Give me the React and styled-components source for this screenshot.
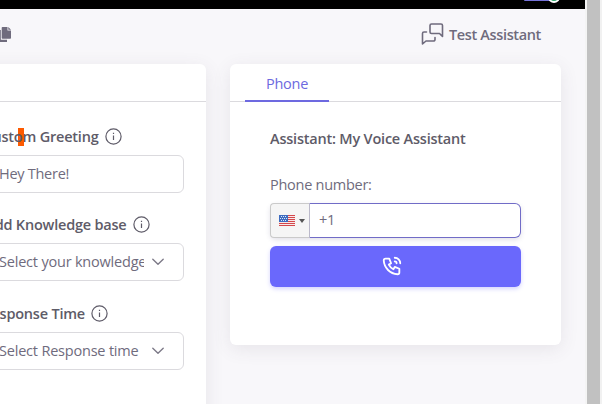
import React from "react";
import styled, { createGlobalStyle } from "styled-components";

const Global = createGlobalStyle`
  * { box-sizing: border-box; }
  body { margin: 0; overflow: hidden; background: #f8f7fa; font-family: "Open Sans", "Noto Sans", sans-serif; font-size: 14.5px; color: #6f6b7d; }
  svg { display: block; flex: none; }
`;

const Shell = styled.div`
  display: flex;
  width: 602px;
  height: 404px;
  overflow: hidden;
`;
const Page = styled.div`
  width: 585px;
  height: 404px;
  overflow: hidden;
  background: #f8f7fa;
`;
const Scrollbar = styled.div`
  width: 17px;
  background: #c1c1c1;
  border-left: 2px solid #f4f4f4;
  border-right: 2px solid #f1f1f1;
`;
const TopBar = styled.div`
  height: 9px;
  background: #000;
  display: flex;
  align-items: flex-start;
  padding-left: 524px;
  overflow: hidden;
`;
const Avatar = styled.div`
  width: 30px;
  height: 1px;
  background: #7673d8;
  border-radius: 0 0 8px 8px;
`;
const Status = styled.div`
  width: 12px;
  height: 12px;
  margin: -9px 0 0 -6px;
  flex: none;
  border-radius: 50%;
  background: #28a568;
  border: 2px solid #fff;
`;
const Toolbar = styled.div`
  height: 55px;
  display: flex;
  justify-content: space-between;
  padding: 13px 44px 0 0;
`;
const CopyIcon = styled.svg`
  margin: 4px 0 0 -5px;
`;
const TestLink = styled.div`
  display: flex;
  height: 24px;
  align-items: center;
  gap: 5px;

  & > span {
    padding-top: 1px;
  }
`;
const Text = styled.span`
  white-space: pre;
  line-height: 22px;
  font-size: 14.5px;
  font-weight: ${(p) => (p.$bold ? 600 : 400)};
  letter-spacing: ${(p) => p.$track ?? (p.$bold ? -0.21 : -0.27)}px;
  color: ${(p) => p.$color || "inherit"};
`;
const Columns = styled.div`
  display: flex;
  align-items: flex-start;
  gap: 24px;
`;
const Card = styled.section`
  background: #fff;
  border-radius: 6px;
  box-shadow: 0 4px 18px rgba(75, 70, 92, 0.1);
  width: ${(p) => p.$width}px;
  height: ${(p) => p.$height}px;
  margin-left: ${(p) => p.$shift || 0}px;
  flex: none;
`;
const CardHeader = styled.div`
  height: 38px;
  border-bottom: 1px solid #dbdade;
  padding-left: 15px;
`;
const Tab = styled.div`
  width: 84px;
  height: 38px;
  border-bottom: 2px solid #6d69e0;
  display: flex;
  justify-content: center;
  padding-top: 9px;
`;
const Form = styled.div`
  padding: 23px 22px 0 21px;
`;
const Group = styled.div`
  height: ${(p) => p.$height}px;
`;
const Label = styled.div`
  display: flex;
  align-items: center;
  height: 22px;
  gap: 6px;
  color: #5e5b68;
  width: ${(p) => p.$width}px;
  justify-content: flex-end;

  & > span {
    padding-top: ${(p) => p.$drop ?? 1}px;
  }
`;
const Marked = styled.span`
  position: relative;
  isolation: isolate;

  &::before {
    content: "";
    position: absolute;
    z-index: -1;
    left: 4px;
    top: 1px;
    width: 6px;
    height: 18px;
    background: #fd5a00;
  }
`;
const Field = styled.div`
  height: 38px;
  margin-top: 8px;
  border: 1px solid #dbdade;
  border-radius: 6px;
  display: flex;
  align-items: center;
  justify-content: space-between;
  padding: 0 18px 0 17px;
`;
const Clip = styled.div`
  width: 145px;
  overflow: hidden;
  display: flex;
`;
const PhoneBody = styled.div`
  padding: 26px 40px 0;
  display: flex;
  flex-direction: column;
`;
const PhoneLabel = styled.div`
  height: 22px;
  margin-top: 24px;
`;
const PhoneInput = styled.div`
  display: flex;
  height: 35px;
  margin-top: 7px;
  border-radius: 6px;
  box-shadow: 0 2px 5px rgba(75, 70, 120, 0.16);
`;
const Country = styled.div`
  width: 39px;
  border: 1px solid #cacaca;
  border-right: 0;
  border-radius: 4px 0 0 4px;
  background: #f5f5f5;
  display: flex;
  align-items: center;
  gap: 4px;
  padding-left: 8px;
`;
const NumberBox = styled.div`
  flex: 1;
  border: 1px solid #716cc7;
  border-left-color: #bbb9ca;
  border-radius: 0 6px 6px 0;
  background: #fff;
  display: flex;
  align-items: center;
  padding: 0 0 1px 9px;
`;
const Caret = styled.i`
  border: 3px solid transparent;
  border-top: 4px solid #555;
  border-bottom: 0;
`;
const CallButton = styled.button`
  height: 41px;
  margin-top: 8px;
  border: 0;
  border-radius: 6px;
  background: #6a68fc;
  display: flex;
  align-items: center;
  justify-content: center;
  padding: 0 8px 1px 0;
  box-shadow: 0 2px 4px rgba(105, 102, 250, 0.28);
`;

const Info = () => (
  <svg width="17" height="17" viewBox="0 0 17 17" fill="none" stroke="#5e5b68" strokeWidth="1.2">
    <circle cx="8.5" cy="8.5" r="7.6" />
    <path d="M8.5 7.4v4.6M8.5 4.7v1.4" />
  </svg>
);
const Chevron = () => (
  <svg width="14" height="8" viewBox="0 0 14 8" fill="none" stroke="#7d7a88" strokeWidth="1.4" strokeLinecap="round" strokeLinejoin="round">
    <path d="M1.8 1.2 7 6.2l5.2-5" />
  </svg>
);
const Chat = () => (
  <svg width="23" height="23" viewBox="0 0 23 23" fill="none" stroke="#6f6b7d" strokeWidth="1.6" strokeLinejoin="round" strokeLinecap="round">
    <path d="M21.5 13.5 18.500 10.500H10.500A1.500 1.500 0 0 1 9 9V2.500A1.500 1.500 0 0 1 10.500 1H20A1.500 1.500 0 0 1 21.500 2.500z" />
    <path d="M5.500 9H3A1.500 1.500 0 0 0 1.500 10.500v10.500L5 18h7.500A1.500 1.500 0 0 0 14 16.500v-2" />
  </svg>
);
const Flag = () => (
  <svg width="16" height="11" viewBox="0 0 16 11" shapeRendering="crispEdges">
    <rect width="16" height="11" fill="#f7e9ea" />
    <g fill="#d4484c">
      <rect width="16" height="1" />
      <rect y="2" width="16" height="1" />
      <rect y="4" width="16" height="1" />
      <rect y="6" width="16" height="1" />
      <rect y="8" width="16" height="1" />
      <rect y="10" width="16" height="1" />
    </g>
    <rect width="9" height="7" fill="#3f6dc0" />
    <g stroke="#dce8fa" strokeDasharray="1 1">
      <path d="M2 1.500h6M1 3.500h7M2 5.500h6" />
    </g>
  </svg>
);
const PhoneCall = () => (
  <svg width="22" height="22" viewBox="0 0 24 24" fill="none" stroke="#fff" strokeWidth="2" strokeLinecap="round" strokeLinejoin="round">
    <path d="M5 4h4l2 5-2.500 1.500a11 11 0 0 0 5 5L15 13l5 2v4a2 2 0 0 1-2 2A16 16 0 0 1 3 6a2 2 0 0 1 2-2" />
    <path d="M15 7a2 2 0 0 1 2 2M15 3a6 6 0 0 1 6 6" />
  </svg>
);

export default function App() {
  return (
    <>
      <Global />
      <Shell>
        <Page>
          <TopBar>
            <Avatar />
            <Status />
          </TopBar>
          <Toolbar>
            <CopyIcon width="17" height="17" viewBox="0 0 17 17" fill="#6f6b7d">
              <path d="M7.500 1h5v3.500H16V12a.8.800 0 0 1-.8.800H7.500A.8.800 0 0 1 6.700 12V1.800A.8.800 0 0 1 7.500 1z" />
              <path d="M13.300 1 16 3.700h-2.700zM1 4h4.800v9.700H12V16H1z" />
            </CopyIcon>
            <TestLink>
              <Chat />
              <Text $bold $track={-0.36}>Test Assistant</Text>
            </TestLink>
          </Toolbar>
          <Columns>
            <Card $width={246} $height={370} $shift={-40}>
              <CardHeader />
              <Form>
                <Group $height={88}>
                  <Label $width={140.5}>
                    <Text $bold>Cust<Marked>o</Marked>m Greeting</Text>
                    <Info />
                  </Label>
                  <Field><Text>Hey There!</Text></Field>
                </Group>
                <Group $height={89}>
                  <Label $width={168.5} $drop={2}>
                    <Text $bold>Add Knowledge base</Text>
                    <Info />
                  </Label>
                  <Field>
                    <Clip><Text $track={-0.2}>Select your knowledge base</Text></Clip>
                    <Chevron />
                  </Field>
                </Group>
                <Group $height={88}>
                  <Label $width={127}>
                    <Text $bold>Response Time</Text>
                    <Info />
                  </Label>
                  <Field>
                    <Clip><Text $track={-0.2}>Select Response time</Text></Clip>
                    <Chevron />
                  </Field>
                </Group>
              </Form>
            </Card>
            <Card $width={331} $height={281}>
              <CardHeader><Tab><Text $color="#6d69e0">Phone</Text></Tab></CardHeader>
              <PhoneBody>
                <Text $bold $color="#5e5b68">Assistant: My Voice Assistant</Text>
                <PhoneLabel><Text>Phone number:</Text></PhoneLabel>
                <PhoneInput>
                  <Country><Flag /><Caret /></Country>
                  <NumberBox><Text>+1</Text></NumberBox>
                </PhoneInput>
                <CallButton aria-label="Call"><PhoneCall /></CallButton>
              </PhoneBody>
            </Card>
          </Columns>
        </Page>
        <Scrollbar />
      </Shell>
    </>
  );
}
